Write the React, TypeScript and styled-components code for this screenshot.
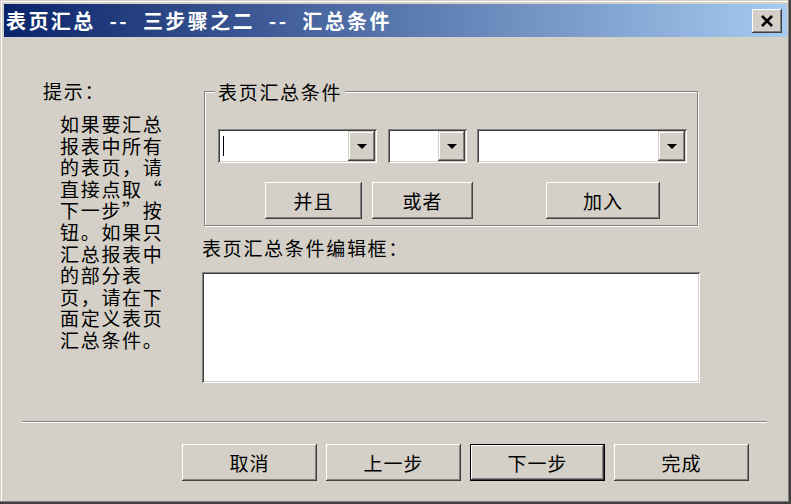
import React from "react";
import styled, { createGlobalStyle, css } from "styled-components";

const Globals = createGlobalStyle`
  html, body { margin: 0; padding: 0; background: #d4d0c8; }
  body { font-family: "Noto Sans CJK SC", "Noto Sans", sans-serif; color: #000; }
`;

const FONT = `"Noto Sans CJK SC", "Noto Sans", sans-serif`;

const Window = styled.div`
  width: 791px;
  height: 504px;
  box-sizing: border-box;
  padding: 4px;
  background: #d4d0c8;
  display: flex;
  flex-direction: column;
  box-shadow: inset -1px -1px 0 #404040, inset -2px -2px 0 #404040,
    inset -3px -3px 0 #808080, inset 1px 1px 0 #d4d0c8, inset 2px 2px 0 #ffffff;
`;

const TitleBar = styled.div`
  height: 33px;
  display: flex;
  align-items: center;
  padding: 0 5px 0 2px;
  background: linear-gradient(to right, #0a246a, #a6caf0);
`;

const TitleText = styled.div`
  flex: 1;
  color: #fff;
  font-family: ${FONT};
  font-weight: 700;
  font-size: 20px;
  letter-spacing: 2.4px;
  white-space: pre;
`;

const CloseButton = styled.div`
  width: 30px;
  height: 24px;
  box-sizing: border-box;
  background: #d4d0c8;
  display: flex;
  align-items: center;
  justify-content: center;
  box-shadow: inset -1px -1px 0 #404040, inset 1px 1px 0 #ffffff,
    inset -2px -2px 0 #808080, inset 2px 2px 0 #d4d0c8;
`;

const Body = styled.div`
  flex: 1;
  display: flex;
  flex-direction: column;
`;

const MainRow = styled.div`
  display: flex;
  padding: 43px 0 0 39px;
`;

const LeftCol = styled.div`
  width: 159px;
  flex-shrink: 0;
`;

const TextStyle = css`
  font-family: ${FONT};
  font-size: 19px;
  line-height: 21px;
  letter-spacing: 1.7px;
  white-space: nowrap;
`;

const HintTitle = styled.div`
  ${TextStyle};
`;

const HintBody = styled.div`
  margin: 12px 0 0 17px;
`;

const HintLine = styled.div`
  ${TextStyle};
  line-height: 21.6px;
`;

const RightCol = styled.div`
  width: 498px;
  display: flex;
  flex-direction: column;
`;

const GroupBox = styled.div`
  position: relative;
  margin: 11px 0 0 2px;
  width: 494px;
  box-sizing: border-box;
  border: 1px solid #808080;
  box-shadow: inset 1px 1px 0 #ffffff, 1px 1px 0 #ffffff;
  padding: 37px 10px 6px 13px;
`;

const Legend = styled.div`
  ${TextStyle};
  position: absolute;
  top: -11px;
  left: 10px;
  padding: 0 3px;
  background: #d4d0c8;
`;

const ComboRow = styled.div`
  display: flex;
  height: 34px;
`;

const Combo = styled.div<{ $w: number; $ml?: number }>`
  width: ${(p) => p.$w}px;
  margin-left: ${(p) => p.$ml ?? 0}px;
  height: 34px;
  box-sizing: border-box;
  padding: 2px;
  display: flex;
  background: #fff;
  box-shadow: inset 1px 1px 0 #808080, inset -1px -1px 0 #ffffff,
    inset 2px 2px 0 #404040, inset -2px -2px 0 #d4d0c8;
`;

const ComboField = styled.div`
  flex: 1;
  display: flex;
  align-items: center;
  padding-left: 3px;
`;

const Caret = styled.span`
  width: 1px;
  height: 20px;
  background: #000;
`;

const DropButton = styled.div`
  width: 27px;
  box-sizing: border-box;
  background: #d4d0c8;
  display: flex;
  align-items: center;
  justify-content: center;
  box-shadow: inset -1px -1px 0 #404040, inset 1px 1px 0 #d4d0c8,
    inset -2px -2px 0 #808080, inset 2px 2px 0 #ffffff;
`;

const Arrow = styled.span`
  width: 0;
  height: 0;
  border-left: 5px solid transparent;
  border-right: 5px solid transparent;
  border-top: 5px solid #000;
  margin-top: 1px;
`;

const ButtonRow = styled.div<{ $mt: number; $pl: number; $gap: number }>`
  display: flex;
  margin-top: ${(p) => p.$mt}px;
  padding-left: ${(p) => p.$pl}px;
  gap: ${(p) => p.$gap}px;
`;

const Button = styled.div<{ $w: number; $ml?: number; $default?: boolean }>`
  width: ${(p) => p.$w}px;
  margin-left: ${(p) => p.$ml ?? 0}px;
  height: 37px;
  box-sizing: border-box;
  display: flex;
  align-items: center;
  justify-content: center;
  background: #d4d0c8;
  font-family: ${FONT};
  font-size: 19px;
  letter-spacing: 1px;
  box-shadow: ${(p) =>
    p.$default
      ? "inset 0 0 0 1px #000, inset -2px -2px 0 #404040, inset 2px 2px 0 #ffffff, inset -3px -3px 0 #808080"
      : "inset -1px -1px 0 #404040, inset 1px 1px 0 #ffffff, inset -2px -2px 0 #808080, inset 2px 2px 0 #d4d0c8"};
`;

const EditLabel = styled.div`
  ${TextStyle};
  margin-top: 11px;
`;

const EditBox = styled.div`
  margin-top: 14px;
  height: 111px;
  background: #fff;
  box-shadow: inset 1px 1px 0 #808080, inset -1px -1px 0 #ffffff,
    inset 2px 2px 0 #404040, inset -2px -2px 0 #d4d0c8;
`;

const Separator = styled.div`
  margin: 38px 20px 0 18px;
  border-top: 1px solid #808080;
  border-bottom: 1px solid #ffffff;
`;

const hintLines = [
  "如果要汇总",
  "报表中所有",
  "的表页，请",
  "直接点取“",
  "下一步”按",
  "钮。如果只",
  "汇总报表中",
  "的部分表",
  "页，请在下",
  "面定义表页",
  "汇总条件。",
];

export default function App() {
  return (
    <>
      <Globals />
      <Window>
        <TitleBar>
          <TitleText>表页汇总  --  三步骤之二  --  汇总条件</TitleText>
          <CloseButton>
            <svg width="14" height="12" viewBox="0 0 14 12">
              <path d="M2 1 L12 11 M12 1 L2 11" stroke="#000" strokeWidth="2.6" />
            </svg>
          </CloseButton>
        </TitleBar>
        <Body>
          <MainRow>
            <LeftCol>
              <HintTitle>提示：</HintTitle>
              <HintBody>
                {hintLines.map((l, i) => (
                  <HintLine key={i}>{l}</HintLine>
                ))}
              </HintBody>
            </LeftCol>
            <RightCol>
              <GroupBox>
                <Legend>表页汇总条件</Legend>
                <ComboRow>
                  <Combo $w={159}>
                    <ComboField>
                      <Caret />
                    </ComboField>
                    <DropButton>
                      <Arrow />
                    </DropButton>
                  </Combo>
                  <Combo $w={79} $ml={11}>
                    <ComboField />
                    <DropButton>
                      <Arrow />
                    </DropButton>
                  </Combo>
                  <Combo $w={210} $ml={10}>
                    <ComboField />
                    <DropButton>
                      <Arrow />
                    </DropButton>
                  </Combo>
                </ComboRow>
                <ButtonRow $mt={19} $pl={47} $gap={10}>
                  <Button $w={97}>并且</Button>
                  <Button $w={101}>或者</Button>
                  <Button $w={114} $ml={63}>加入</Button>
                </ButtonRow>
              </GroupBox>
              <EditLabel>表页汇总条件编辑框：</EditLabel>
              <EditBox />
            </RightCol>
          </MainRow>
          <Separator />
          <ButtonRow $mt={21} $pl={178} $gap={9}>
            <Button $w={135}>取消</Button>
            <Button $w={135}>上一步</Button>
            <Button $w={135} $default>下一步</Button>
            <Button $w={135}>完成</Button>
          </ButtonRow>
        </Body>
      </Window>
    </>
  );
}
